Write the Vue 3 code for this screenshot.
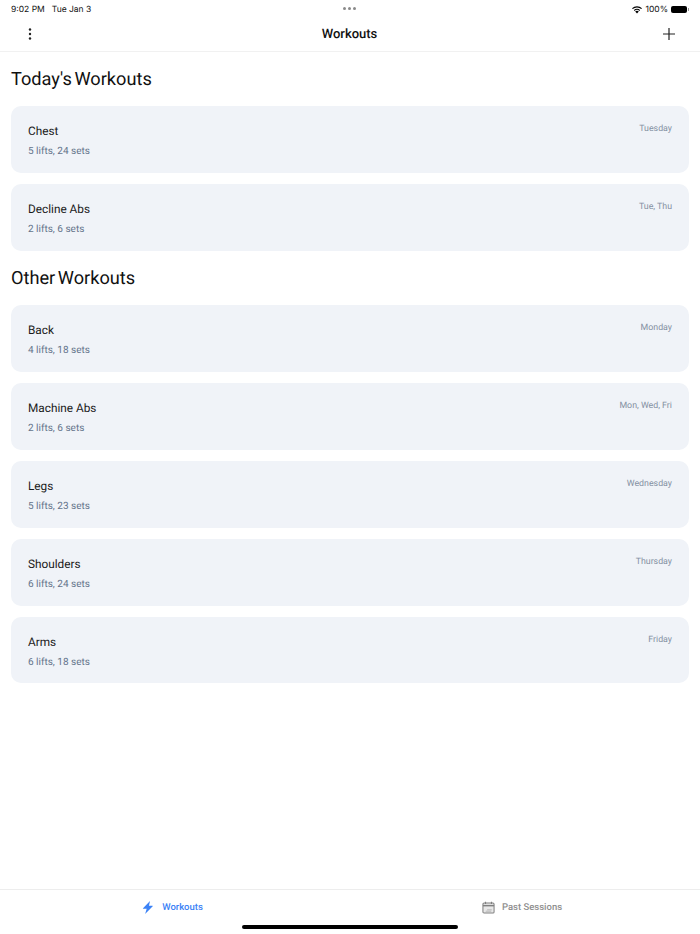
<template>
  <div class="screen">
    <div class="status-bar">
      <span class="time">9:02 PM</span>
      <span class="date">Tue Jan 3</span>
      <div class="dots"><i></i><i></i><i></i></div>
      <div class="status-right">
        <svg width="12" height="9" viewBox="0 0 12 9">
          <path d="M6 8.600 4.200 6.500a2.700 2.700 0 0 1 3.600 0L6 8.600Z" fill="#000" />
          <path d="M2.900 5.100a4.700 4.700 0 0 1 6.200 0L8.400 5.900a3.600 3.600 0 0 0-4.800 0L2.900 5.100Z" fill="#000" />
          <path d="M1 3.200a7.400 7.400 0 0 1 10 0l-.8.900a6.200 6.200 0 0 0-8.400 0L1 3.200Z" fill="#000" />
        </svg>
        <span>100%</span>
        <div class="battery"></div>
        <div class="battery-tip"></div>
      </div>
    </div>

    <header class="nav">
      <svg class="nav-icon" width="24" height="24" viewBox="0 0 24 24" fill="#222">
        <circle cx="12" cy="7.500" r="1.200" />
        <circle cx="12" cy="12" r="1.200" />
        <circle cx="12" cy="16.500" r="1.200" />
      </svg>
      <h1>Workouts</h1>
      <svg class="nav-icon plus" width="24" height="24" viewBox="0 0 24 24" fill="none" stroke="#222" stroke-width="1.200">
        <path d="M12 6v12M6 12h12" />
      </svg>
    </header>

    <main class="content">
      <h2>Today's Workouts</h2>
      <div class="list">
        <div v-for="w in today" :key="w.name" class="card">
          <div class="info">
            <div class="name">{{ w.name }}</div>
            <div class="meta">{{ w.meta }}</div>
          </div>
          <div class="days">{{ w.days }}</div>
        </div>
      </div>
      <h2 class="second">Other Workouts</h2>
      <div class="list">
        <div v-for="w in other" :key="w.name" class="card">
          <div class="info">
            <div class="name">{{ w.name }}</div>
            <div class="meta">{{ w.meta }}</div>
          </div>
          <div class="days">{{ w.days }}</div>
        </div>
      </div>
    </main>

    <footer class="tabs">
      <div class="tab active">
        <svg width="14" height="15" viewBox="0 0 16 16" fill="#3b82f6">
          <path d="M10.300 0.500 2.300 8.800c-.3.300-.1.700.3.700h3.900L4.700 15.500l8.700-8.900c.3-.3.100-.7-.3-.7H9.100l1.200-5.400Z" />
        </svg>
        <span>Workouts</span>
      </div>
      <div class="tab">
        <svg width="13" height="13" viewBox="0 0 14 14" fill="none">
          <rect x="1" y="2.200" width="12" height="10.800" rx="1.200" fill="#e8e8e8" stroke="#808080" stroke-width="1.100" />
          <path d="M1 5h12" stroke="#808080" stroke-width="1.600" />
          <path d="M3.800 0.800v2.400M10.200 0.800v2.400" stroke="#808080" stroke-width="1.200" />
          <path d="M5.500 9.500h5M4 11h6" stroke="#b5b5b5" stroke-width="1" />
        </svg>
        <span>Past Sessions</span>
      </div>
      <div class="home-bar"></div>
    </footer>
  </div>
</template>

<script setup>
const today = [
  { name: "Chest", meta: "5 lifts, 24 sets", days: "Tuesday" },
  { name: "Decline Abs", meta: "2 lifts, 6 sets", days: "Tue, Thu" },
];

const other = [
  { name: "Back", meta: "4 lifts, 18 sets", days: "Monday" },
  { name: "Machine Abs", meta: "2 lifts, 6 sets", days: "Mon, Wed, Fri" },
  { name: "Legs", meta: "5 lifts, 23 sets", days: "Wednesday" },
  { name: "Shoulders", meta: "6 lifts, 24 sets", days: "Thursday" },
  { name: "Arms", meta: "6 lifts, 18 sets", days: "Friday" },
];
</script>

<style>
html,
body {
  margin: 0;
  background: #fff;
}
</style>

<style scoped>
.screen {
  width: 700px;
  height: 934px;
  display: flex;
  flex-direction: column;
  overflow: hidden;
  background: #fff;
  font-family: Roboto, "Liberation Sans", sans-serif;
  color: #111;
  text-rendering: geometricPrecision;
}

.status-bar {
  height: 17px;
  box-sizing: border-box;
  flex-shrink: 0;
  display: flex;
  align-items: center;
  position: relative;
  padding: 2px 11px 0;
  font-family: Inter, sans-serif;
  font-size: 8.500px;
  color: #111;
}

.date {
  margin-left: 7px;
}

.dots {
  position: absolute;
  left: 343px;
  top: 7px;
  display: flex;
  gap: 2px;
}

.dots i {
  width: 3px;
  height: 3px;
  border-radius: 50%;
  background: #8a8a8a;
}

.status-right {
  margin-left: auto;
  display: flex;
  align-items: center;
  gap: 2px;
}

.battery {
  width: 16px;
  height: 7px;
  background: #000;
  border-radius: 2px;
  margin-left: 1px;
}

.battery-tip {
  width: 1px;
  height: 3px;
  margin-left: -1px;
  background: #999;
}

.nav {
  height: 34px;
  flex-shrink: 0;
  display: flex;
  align-items: center;
  justify-content: space-between;
  padding: 0 18px;
  border-bottom: 1px solid #f1f1f1;
}

.nav h1 {
  margin: 0;
  padding-top: 1px;
  font-size: 13px;
  font-weight: 500;
}

.nav-icon {
  display: block;
}

.plus {
  margin-right: 1px;
}

.content {
  flex: 1;
  padding: 17px 11px 0;
}

h2 {
  margin: 0 0 15px;
  font-size: 18.200px;
  line-height: 22px;
  font-weight: 400;
  word-spacing: -2px;
}

h2.second {
  margin-top: 17px;
  margin-bottom: 15.800px;
}

.list {
  display: flex;
  flex-direction: column;
  gap: 11px;
}

.card {
  height: 66.800px;
  box-sizing: border-box;
  display: flex;
  justify-content: space-between;
  padding: 16px 17px 0;
  background: #f0f3f8;
  border-radius: 10px;
}

.name {
  font-size: 11.800px;
  line-height: 18px;
  color: #1a1a1a;
}

.meta {
  margin-top: 4px;
  font-size: 10px;
  line-height: 15px;
  color: #64748b;
}

.days {
  font-size: 8.800px;
  line-height: 13px;
  margin-top: 1px;
  color: #8591a3;
}

.tabs {
  height: 44px;
  flex-shrink: 0;
  position: relative;
  display: flex;
  border-top: 1px solid #ededed;
}

.tab {
  flex: 1;
  height: 35px;
  box-sizing: border-box;
  padding-right: 6px;
  display: flex;
  align-items: center;
  justify-content: center;
  gap: 7px;
  font-size: 9.500px;
  font-weight: 500;
  color: #8f8f8f;
}

.tab svg {
  display: block;
}

.tab.active {
  color: #3b82f6;
}

.home-bar {
  position: absolute;
  left: 242px;
  bottom: 5px;
  width: 216px;
  height: 4px;
  border-radius: 2px;
  background: #000;
}
</style>
